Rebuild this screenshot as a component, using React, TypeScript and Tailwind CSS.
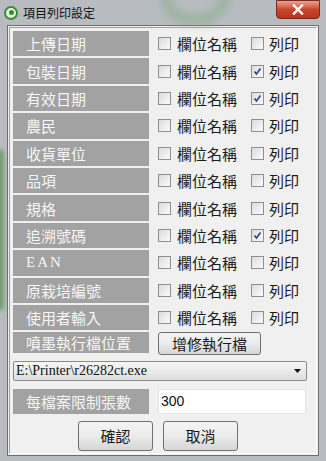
import { useState } from "react"

const rows: { label: string; name: boolean; print: boolean; serif?: boolean }[] = [
  { label: "上傳日期", name: false, print: false },
  { label: "包裝日期", name: false, print: true },
  { label: "有效日期", name: false, print: true },
  { label: "農民", name: false, print: false },
  { label: "收貨單位", name: false, print: false },
  { label: "品項", name: false, print: false },
  { label: "規格", name: false, print: false },
  { label: "追溯號碼", name: false, print: true },
  { label: "EAN", name: false, print: false, serif: true },
  { label: "原栽培編號", name: false, print: false },
  { label: "使用者輸入", name: false, print: false },
]

const cjk = "font-['Noto_Sans_CJK_TC','Noto_Sans',sans-serif]"

function Check({ checked }: { checked: boolean }) {
  return (
    <span className="flex h-[13px] w-[13px] shrink-0 items-center justify-center border border-[#8f8f8f] bg-gradient-to-br from-[#dcdcdc] to-[#fbfbfb]">
      {checked && (
        <svg width="9" height="9" viewBox="0 0 9 9">
          <path d="M1.5 4.5 L3.5 7 L7.5 1.5" fill="none" stroke="#2a3f8f" strokeWidth="1.6" />
        </svg>
      )}
    </span>
  )
}

function Label({ text, serif }: { text: string; serif?: boolean }) {
  return (
    <div
      className={`flex h-full w-[136px] shrink-0 items-center bg-[#a2a2a2] pl-[13px] text-[15px] leading-none text-[#f6f6f6] ${
        serif ? "font-['Liberation_Serif',serif] tracking-[2px]" : cjk
      }`}
    >
      {text}
    </div>
  )
}

function WinButton({ children, className }: { children: React.ReactNode; className: string }) {
  return (
    <button
      className={`flex items-center justify-center rounded-[3px] border border-[#707070] bg-gradient-to-b from-[#f4f4f4] via-[#ebebeb] to-[#d6d6d6] text-[15px] text-[#1a1a1a] ${cjk} ${className}`}
    >
      {children}
    </button>
  )
}

export default function App() {
  const [state] = useState(rows)

  return (
    <div className="relative h-[461px] w-[326px] overflow-hidden bg-[#b8bcc0]">
      {/* blurred aero backdrop */}
      <div className="absolute left-[160px] top-[-38px] h-[62px] w-[70px] rounded-full border-[9px] border-[#6fa56f] opacity-45 blur-[5px]" />
      <div className="absolute left-[-6px] top-[150px] h-[160px] w-[10px] bg-[#5d8f4f] opacity-70 blur-[2px]" />

      {/* title bar */}
      <div className="relative flex h-[25px] items-center pl-[4px]">
        <span className="flex h-[14px] w-[14px] items-center justify-center rounded-full border-2 border-[#3c8a3a] bg-[#e8f1d8]">
          <span className="h-[5px] w-[5px] rounded-full bg-[#3c8a3a]" />
        </span>
        <span className={`ml-[5px] text-[12px] text-[#111] ${cjk}`}>項目列印設定</span>
        <div className="absolute right-[6px] top-0 flex h-[19px] w-[44px] items-center justify-center rounded-b-[4px] border border-[#7a2a1c] bg-gradient-to-b from-[#e8a293] via-[#c9462e] to-[#b8331c]">
          <svg width="12" height="11" viewBox="0 0 12 11">
            <path d="M2 1.5 L10 9.5 M10 1.5 L2 9.5" stroke="#fff" strokeWidth="2.4" strokeLinecap="square" />
          </svg>
        </div>
      </div>

      {/* client area */}
      <div className="mx-[7px] h-[431px] border border-[#6e6e6e] bg-[#f0f0f0] p-[1px]">
        <div className="flex h-full flex-col border border-[#a0a0a0] border-r-white border-b-white px-[3px] pt-[3px]">
          <div className="flex flex-col gap-[2px]">
            {state.map((r) => (
              <div key={r.label} className="flex h-[25.4px] items-center">
                <Label text={r.label} serif={r.serif} />
                <div className={`flex items-center pl-[9px] text-[15px] text-[#1a1a1a] ${cjk}`}>
                  <Check checked={r.name} />
                  <span className="ml-[6px] leading-none">欄位名稱</span>
                  <span className="ml-[14px]">
                    <Check checked={r.print} />
                  </span>
                  <span className="ml-[5px] leading-none">列印</span>
                </div>
              </div>
            ))}
            <div className="flex h-[21px] items-stretch">
              <Label text="噴墨執行檔位置" />
              <WinButton className="ml-[9px] h-[23px] w-[103px]">增修執行檔</WinButton>
            </div>
          </div>

          <div className="mt-[8px] flex h-[20px] w-[294px] items-center justify-between rounded-[2px] border border-[#8a8a8a] bg-gradient-to-b from-[#f6f6f6] to-[#dedede] pl-[2px] pr-[5px]">
            <span className="font-['Liberation_Serif',serif] text-[14px] leading-none text-[#111]">E:\Printer\r26282ct.exe</span>
            <svg width="7" height="4" viewBox="0 0 7 4">
              <path d="M0 0 L7 0 L3.5 4 Z" fill="#111" />
            </svg>
          </div>

          <div className="mt-[8px] flex h-[25px] items-stretch">
            <Label text="每檔案限制張數" />
            <div className="ml-[9px] flex w-[148px] items-center border border-[#e2e2e2] bg-white pl-[2px] font-['Liberation_Sans',sans-serif] text-[14px] text-[#111]">
              300
            </div>
          </div>

          <div className="mt-[7px] flex justify-center gap-[10px] pr-[10px]">
            <WinButton className="h-[30px] w-[75px]">確認</WinButton>
            <WinButton className="h-[30px] w-[75px]">取消</WinButton>
          </div>
        </div>
      </div>
    </div>
  )
}
